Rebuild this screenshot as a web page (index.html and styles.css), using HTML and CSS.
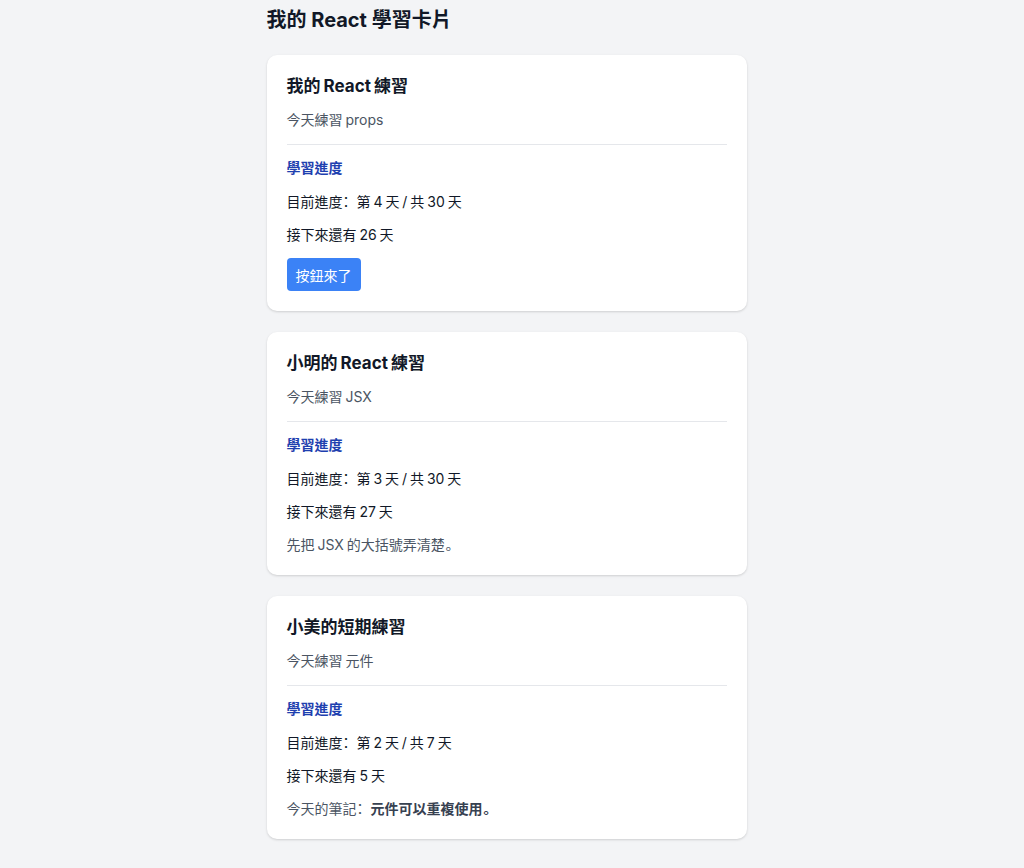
FILE: index.html
```html
<!DOCTYPE html>
<html lang="zh-Hant">
<head>
  <meta charset="UTF-8" />
  <title>我的 React 學習卡片</title>
  <link rel="stylesheet" href="styles.css">
</head>
<body>

<div class="page">
  <h1 class="page-title">我的 React 學習卡片</h1>

  <div class="card">
    <h2 class="card-title">我的 React 練習</h2>
    <p class="card-sub">今天練習 props</p>
    <hr class="divider">
    <p class="section-label">學習進度</p>
    <p class="line">目前進度<span class="colon">：</span>第 4 天 / 共 30 天</p>
    <p class="line">接下來還有 26 天</p>
    <button class="btn">按鈕來了</button>
  </div>

  <div class="card">
    <h2 class="card-title">小明的 React 練習</h2>
    <p class="card-sub">今天練習 JSX</p>
    <hr class="divider">
    <p class="section-label">學習進度</p>
    <p class="line">目前進度<span class="colon">：</span>第 3 天 / 共 30 天</p>
    <p class="line">接下來還有 27 天</p>
    <p class="note">先把 JSX 的大括號弄清楚<span class="period">。</span></p>
  </div>

  <div class="card">
    <h2 class="card-title">小美的短期練習</h2>
    <p class="card-sub">今天練習 元件</p>
    <hr class="divider">
    <p class="section-label">學習進度</p>
    <p class="line">目前進度<span class="colon">：</span>第 2 天 / 共 7 天</p>
    <p class="line">接下來還有 5 天</p>
    <p class="note">今天的筆記<span class="colon">：</span><strong>元件可以重複使用<span class="period">。</span></strong></p>
  </div>
</div>

</body>
</html>
```

FILE: styles.css
```css
body {
  margin: 0;
  padding: 0 11px 0 0;
  background: #f3f4f6;
  font-family: "Inter", "Noto Sans CJK TC", sans-serif;
  font-size: 14px;
  color: #111827;
  word-spacing: -1px;
}

.page {
  width: 480px;
  margin: 0 auto;
  padding: 6px 0 30px;
}

.page-title {
  margin: 0 0 21px;
  font-size: 20px;
  line-height: 28px;
  font-weight: 700;
  color: #111827;
  word-spacing: 0;
}

.card {
  background: #fff;
  border-radius: 10px;
  padding: 20px;
  margin-bottom: 21px;
  box-shadow: 0 1px 3px rgba(0, 0, 0, 0.1), 0 1px 2px rgba(0, 0, 0, 0.06);
}

.card-title {
  margin: 0;
  font-size: 17px;
  line-height: 22px;
  font-weight: 700;
  color: #111827;
}

.card-sub {
  margin: 12px 0 0;
  line-height: 22px;
  color: #4b5563;
}

.divider {
  margin: 13px 0 0;
  border: none;
  border-top: 1px solid #e5e7eb;
}

.section-label {
  margin: 12px 0 0;
  line-height: 22px;
  font-weight: 700;
  color: #1e40af;
}

.line {
  margin: 12px 0 0;
  line-height: 21px;
  color: #111827;
}

.note {
  margin: 12px 0 0;
  line-height: 21px;
  color: #4b5563;
}

.note strong {
  color: #374151;
  font-weight: 700;
}

/* 全形冒號靠左：半寬字形 + 右邊補空 */
.colon {
  font-feature-settings: "halt";
  margin-right: 7px;
}

/* 句號放左下 */
.period {
  display: inline-block;
  font-feature-settings: "halt";
  transform: translateY(0.3em);
}

.btn {
  display: block;
  margin-top: 13px;
  height: 33px;
  padding: 0 9px;
  border: none;
  border-radius: 4px;
  background: #3b82f6;
  color: #fff;
  font-family: inherit;
  font-size: 14px;
  cursor: pointer;
}
```
